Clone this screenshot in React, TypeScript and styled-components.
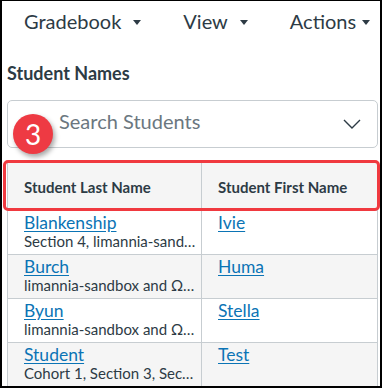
import styled, { createGlobalStyle } from 'styled-components';

const GlobalStyle = createGlobalStyle`
  html, body {
    margin: 0;
    padding: 0;
    background: #fff;
  }
  body {
    font-family: Lato, "Open Sans", sans-serif;
    color: #2d3b45;
  }
`;

const students = [
  { last: 'Blankenship', first: 'Ivie', sections: 'Section 4, limannia-sand…' },
  { last: 'Burch', first: 'Huma', sections: 'limannia-sandbox and Ω…' },
  { last: 'Byun', first: 'Stella', sections: 'limannia-sandbox and Ω…' },
  { last: 'Student', first: 'Test', sections: 'Cohort 1, Section 3, Sec…' },
];

const App = () => {
  return (
    <>
      <GlobalStyle />
      <Frame>
        <Toolbar>
          <MenuButton>
            Gradebook <Caret />
          </MenuButton>
          <MenuButton>
            View <Caret />
          </MenuButton>
          <MenuButton $tight>
            Actions <Caret />
          </MenuButton>
        </Toolbar>

        <Heading>Student Names</Heading>

        <SearchBox>
          <Placeholder>Search Students</Placeholder>
          <svg width="18" height="10" viewBox="0 0 18 10">
            <path d="M1 1 L9 9 L17 1" fill="none" stroke="#2d3b45" strokeWidth="1.4" />
          </svg>
        </SearchBox>

        <Table>
          <HeaderRow>
            <HeaderCell>Student Last Name</HeaderCell>
            <HeaderCell>Student First Name</HeaderCell>
          </HeaderRow>
          {students.map((s, i) => (
            <Row key={s.last} $shaded={i % 2 === 1}>
              <Cell>
                <NameLink href="#">{s.last}</NameLink>
                <Sections>{s.sections}</Sections>
              </Cell>
              <Cell>
                <NameLink href="#">{s.first}</NameLink>
              </Cell>
            </Row>
          ))}
        </Table>

        <Highlight />
        <StepBadge>3</StepBadge>
      </Frame>
    </>
  );
};

const Frame = styled.div`
  position: relative;
  box-sizing: border-box;
  width: 382px;
  height: 388px;
  border: solid #000;
  border-width: 1px 2px 2px 2px;
  padding: 0 2px 0 5px;
  overflow: hidden;
`;

const Toolbar = styled.div`
  display: flex;
  gap: 42px;
  padding: 8px 0 8px 17px;
`;

const MenuButton = styled.div<{ $tight?: boolean }>`
  display: flex;
  align-items: center;
  gap: ${(p) => (p.$tight ? '6px' : '12px')};
  font-size: 20px;
  line-height: 24px;
  color: #2d3b45;
`;

const Caret = styled.span`
  width: 0;
  height: 0;
  border-left: 4px solid transparent;
  border-right: 4px solid transparent;
  border-top: 5px solid #2d3b45;
  margin-top: 2px;
`;

const Heading = styled.h2`
  margin: 21px 0 0;
  font-size: 18px;
  line-height: 22px;
  font-weight: 700;
  color: #2d3b45;
`;

const SearchBox = styled.div`
  box-sizing: border-box;
  height: 48px;
  margin-top: 16px;
  border: 1px solid #c7cdd1;
  border-radius: 5px;
  display: flex;
  align-items: center;
  justify-content: space-between;
  padding: 0 16px 0 51px;
`;

const Placeholder = styled.span`
  font-size: 20px;
  line-height: 24px;
  margin-top: -6px;
  color: #6b7780;
`;

const Table = styled.div`
  margin-top: 13px;
  border-left: 1px solid #c7cdd1;
  border-right: 1px solid #c7cdd1;
`;

const HeaderRow = styled.div`
  display: grid;
  grid-template-columns: 193px 1fr;
  height: 49px;
  background: #f5f5f5;
  border-bottom: 1px solid #c7cdd1;
`;

const HeaderCell = styled.div`
  display: flex;
  align-items: center;
  padding: 3px 0 0 16px;
  font-size: 15px;
  line-height: 18px;
  font-weight: 700;
  & + & {
    border-left: 1px solid #c7cdd1;
  }
`;

const Row = styled.div<{ $shaded: boolean }>`
  display: grid;
  grid-template-columns: 193px 1fr;
  height: 43px;
  background: ${(p) => (p.$shaded ? '#f5f5f5' : '#fff')};
  border-bottom: 1px solid #c7cdd1;
`;

const Cell = styled.div`
  display: flex;
  flex-direction: column;
  padding: 2px 0 0 16px;
  & + & {
    border-left: 1px solid #c7cdd1;
  }
`;

const NameLink = styled.a`
  align-self: flex-start;
  font-size: 17.5px;
  line-height: 20px;
  color: #0b74b5;
  text-decoration: underline;
  text-underline-offset: 2px;
`;

const Sections = styled.span`
  font-size: 15px;
  line-height: 16px;
  color: #2d3b45;
  white-space: nowrap;
`;

const Highlight = styled.div`
  position: absolute;
  left: 1px;
  top: 159px;
  width: 377px;
  height: 51px;
  box-sizing: border-box;
  border: 3px solid #f0393f;
  border-radius: 5px;
  pointer-events: none;
`;

const StepBadge = styled.div`
  position: absolute;
  left: 11px;
  top: 113px;
  width: 40px;
  height: 40px;
  border-radius: 50%;
  background: #ee3a43;
  color: #fff;
  font-size: 28px;
  line-height: 40px;
  text-align: center;
  box-shadow: 2px 3px 5px rgba(0, 0, 0, 0.35);
`;

export default App;
